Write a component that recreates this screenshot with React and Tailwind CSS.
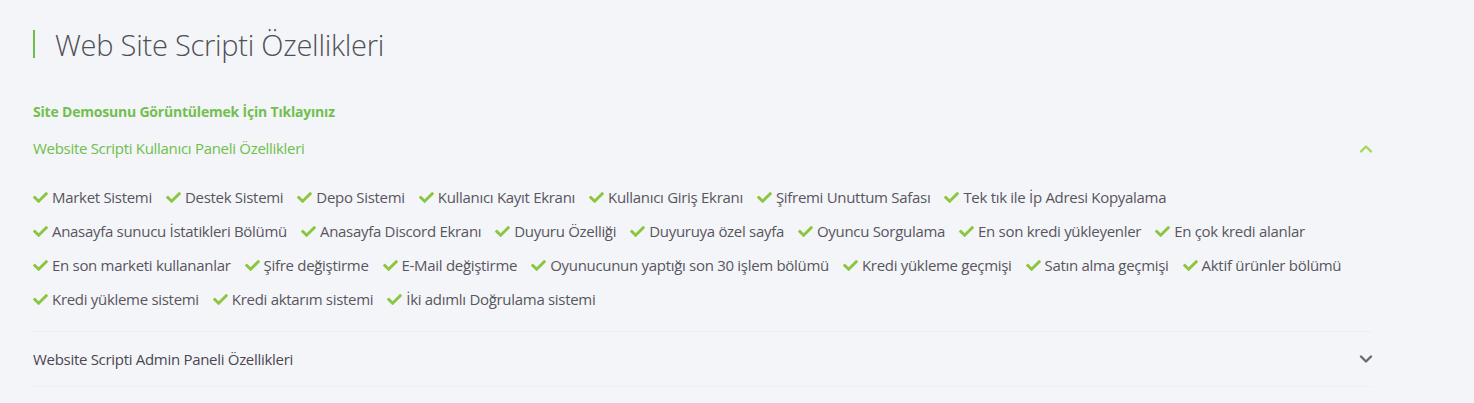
import React, { useState } from "react";
import { FaCheck } from "react-icons/fa";

const userFeatures = [
  "Market Sistemi",
  "Destek Sistemi",
  "Depo Sistemi",
  "Kullanıcı Kayıt Ekranı",
  "Kullanıcı Giriş Ekranı",
  "Şifremi Unuttum Safası",
  "Tek tık ile İp Adresi Kopyalama",
  "Anasayfa sunucu İstatikleri Bölümü",
  "Anasayfa Discord Ekranı",
  "Duyuru Özelliği",
  "Duyuruya özel sayfa",
  "Oyuncu Sorgulama",
  "En son kredi yükleyenler",
  "En çok kredi alanlar",
  "En son marketi kullananlar",
  "Şifre değiştirme",
  "E-Mail değiştirme",
  "Oyunucunun yaptığı son 30 işlem bölümü",
  "Kredi yükleme geçmişi",
  "Satın alma geçmişi",
  "Aktif ürünler bölümü",
  "Kredi yükleme sistemi",
  "Kredi aktarım sistemi",
  "İki adımlı Doğrulama sistemi",
];

const Chevron = ({ up, className }) => (
  <svg
    width="14"
    height="9"
    viewBox="0 0 14 9"
    fill="none"
    stroke="currentColor"
    strokeWidth="2.4"
    strokeLinecap="round"
    strokeLinejoin="round"
    className={className}
  >
    {up ? <path d="M2 7.5 L7 2.5 L12 7.5" /> : <path d="M2 1.5 L7 6.5 L12 1.5" />}
  </svg>
);

const App = () => {
  const [open, setOpen] = useState(true);

  return (
    <div
      className="min-h-[403px] bg-[#f4f5f9] pl-[33px] pr-[102px] pt-[30px]"
      style={{ fontFamily: '"Open Sans", sans-serif' }}
    >
      {/* Title */}
      <div className="border-l-2 border-[#6cc04a] pl-[20px] h-[28px] flex items-center">
        <h1 className="text-[29px] font-light text-[#4f4f55] leading-none tracking-[-0.25px]">
          Web Site Scripti Özellikleri
        </h1>
      </div>

      <a className="block mt-[44px] text-[14px] font-bold text-[#72bf4f] leading-[20px] tracking-[-0.2px]">
        Site Demosunu Görüntülemek İçin Tıklayınız
      </a>

      {/* User panel */}
      <button
        onClick={() => setOpen(!open)}
        className="w-full flex items-center justify-between mt-[16px] h-[20px] text-left"
      >
        <span className="text-[15px] text-[#6cc04a] tracking-[-0.3px]">
          Website Scripti Kullanıcı Paneli Özellikleri
        </span>
        <Chevron up={open} className="text-[#a6d65a] mr-[-1px]" />
      </button>

      {open && (
        <div className="flex flex-wrap pt-[22px] pb-[15px] border-b border-[#eef0ec]">
          {userFeatures.map((f) => (
            <div key={f} className="flex items-center h-[34px] mr-[14px]">
              <FaCheck className="text-[#8cc63f] w-[15px] h-[15px] mr-[4px]" />
              <span className="text-[15px] text-[#58555e] tracking-[-0.3px]">{f}</span>
            </div>
          ))}
        </div>
      )}

      {/* Admin panel */}
      <button className="w-full flex items-center justify-between h-[55px] border-b border-[#eef0ec] text-left">
        <span className="text-[15px] text-[#4a4750] tracking-[-0.3px]">
          Website Scripti Admin Paneli Özellikleri
        </span>
        <Chevron className="text-[#6b6b70] mr-[-1px]" />
      </button>
    </div>
  );
};

export default App;
